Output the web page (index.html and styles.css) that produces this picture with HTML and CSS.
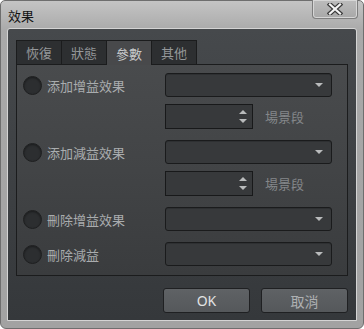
FILE: index.html
```html
<!DOCTYPE html>
<html lang="zh-Hant">
<head>
    <meta charset="UTF-8">
    <title>效果</title>
    <link rel="stylesheet" href="styles.css">
</head>
<body>
    <div class="window">
        <div class="titlebar">
            <span class="title">效果</span>
            <div class="close">
                <svg width="18" height="12" viewBox="0 0 18 12">
                    <path d="M4 1.5 L14 10.5 M14 1.5 L4 10.5" stroke="#3a3a3a" stroke-width="4.5" stroke-linecap="square"/>
                    <path d="M4 1.5 L14 10.5 M14 1.5 L4 10.5" stroke="#f4f4f4" stroke-width="2.2" stroke-linecap="square"/>
                </svg>
            </div>
        </div>
        <div class="client">
            <div class="tabs">
                <div class="tab">恢復</div>
                <div class="tab">狀態</div>
                <div class="tab active">參數</div>
                <div class="tab">其他</div>
            </div>
            <div class="panel">
                <div class="row">
                    <label class="opt"><span class="radio"></span>添加增益效果</label>
                    <div class="combo"><span class="arrow"></span></div>
                </div>
                <div class="row near">
                    <span></span>
                    <div class="spinline">
                        <div class="spin"><span class="up"></span><span class="down"></span></div>
                        <span class="unit">場景段</span>
                    </div>
                </div>
                <div class="row">
                    <label class="opt"><span class="radio"></span>添加減益效果</label>
                    <div class="combo"><span class="arrow"></span></div>
                </div>
                <div class="row near">
                    <span></span>
                    <div class="spinline">
                        <div class="spin"><span class="up"></span><span class="down"></span></div>
                        <span class="unit">場景段</span>
                    </div>
                </div>
                <div class="row">
                    <label class="opt"><span class="radio"></span>刪除增益效果</label>
                    <div class="combo"><span class="arrow"></span></div>
                </div>
                <div class="row">
                    <label class="opt"><span class="radio"></span>刪除減益</label>
                    <div class="combo"><span class="arrow"></span></div>
                </div>
            </div>
            <div class="buttons">
                <button class="btn ok">OK</button>
                <button class="btn">取消</button>
            </div>
        </div>
    </div>
</body>
</html>
```

FILE: styles.css
```css
body { margin: 0; padding: 0; background: #ffffff; font-family: "Noto Sans CJK TC", "Noto Sans", sans-serif; }
.window { width: 364px; height: 329px; box-sizing: border-box; border: 1px solid #6e6e6e; border-radius: 5px 5px 6px 6px; background: linear-gradient(#c4c4c4, #a9a9a9 30px, #a2a2a2); display: flex; flex-direction: column; padding: 0 6px 7px 6px; }
.titlebar { height: 27px; display: flex; align-items: flex-start; justify-content: space-between; }
.title { font-size: 13px; color: #141414; line-height: 15px; margin-top: 7px; margin-left: 1px; }
.close { width: 46px; height: 19px; box-sizing: border-box; margin-top: -1px; margin-right: -1px; border: 1px solid #7e7e7e; border-top: none; border-radius: 0 0 4px 4px; box-shadow: inset 0 0 0 1px #d6d6d6; background: linear-gradient(#bcbcbc, #a8a8a8); display: flex; align-items: center; justify-content: center; }
.client { flex: 1; border: 1px solid #d4d4d4; border-radius: 3px 3px 0 0; background: linear-gradient(#46494c, #3c3f42 60%, #35383b); padding: 11px 7px 0 8px; display: flex; flex-direction: column; }
.tabs { display: flex; height: 24px; }
.tab { width: 46px; box-sizing: border-box; border: 1px solid #1b1c1d; border-bottom: none; margin-right: -1px; background: #2d2f31; color: #95989a; font-size: 13px; display: flex; align-items: center; justify-content: center; }
.tab.active { background: #48494b; color: #c6c8c9; position: relative; z-index: 1; margin-bottom: -1px; height: 25px; }
.panel { width: 332px; height: 212px; box-sizing: border-box; border: 1px solid #1b1c1d; background: linear-gradient(#494b4d, #424446 50%, #3a3c3e); padding: 8px 0 0 6px; display: flex; flex-direction: column; gap: 11px; }
.row { display: grid; grid-template-columns: 142px 167px; align-items: center; }
.row.near { margin-top: -4px; }
.opt { display: flex; align-items: center; gap: 5px; color: #a9acae; font-size: 13px; }
.radio { width: 17px; height: 17px; border-radius: 50%; background: #2c2e30; border: 1px solid #1e1f20; box-shadow: inset 0 1px 2px rgba(0, 0, 0, 0.4); }
.combo { height: 24px; box-sizing: border-box; border: 1px solid #1a1b1c; border-radius: 3px; background: #37393b; box-shadow: inset 0 1px 0 #2e3032; display: flex; align-items: center; justify-content: flex-end; padding-right: 8px; }
.arrow { width: 0; height: 0; border-left: 4px solid transparent; border-right: 4px solid transparent; border-top: 4px solid #b9bbbc; }
.spinline { display: flex; align-items: center; gap: 12px; }
.spin { width: 88px; height: 25px; box-sizing: border-box; border: 1px solid #18191a; background: #37393b; display: flex; flex-direction: column; align-items: flex-end; justify-content: center; gap: 5px; padding-right: 5px; }
.spin .up { width: 0; height: 0; border-left: 4px solid transparent; border-right: 4px solid transparent; border-bottom: 4px solid #b9bbbc; }
.spin .down { width: 0; height: 0; border-left: 4px solid transparent; border-right: 4px solid transparent; border-top: 4px solid #b9bbbc; }
.unit { color: #84878a; font-size: 13px; }
.buttons { display: flex; justify-content: flex-end; gap: 11px; margin-top: 12px; padding-right: 1px; }
.btn { width: 87px; height: 25px; box-sizing: border-box; border: 1px solid #1f2022; border-radius: 3px; background: linear-gradient(#5f6265, #55585b); color: #aeb0b2; font-family: "Noto Sans CJK TC", "Noto Sans", sans-serif; font-size: 14px; padding: 0; line-height: 22px; }
.btn.ok { color: #e2e3e4; font-family: "Noto Sans", sans-serif; }
```
